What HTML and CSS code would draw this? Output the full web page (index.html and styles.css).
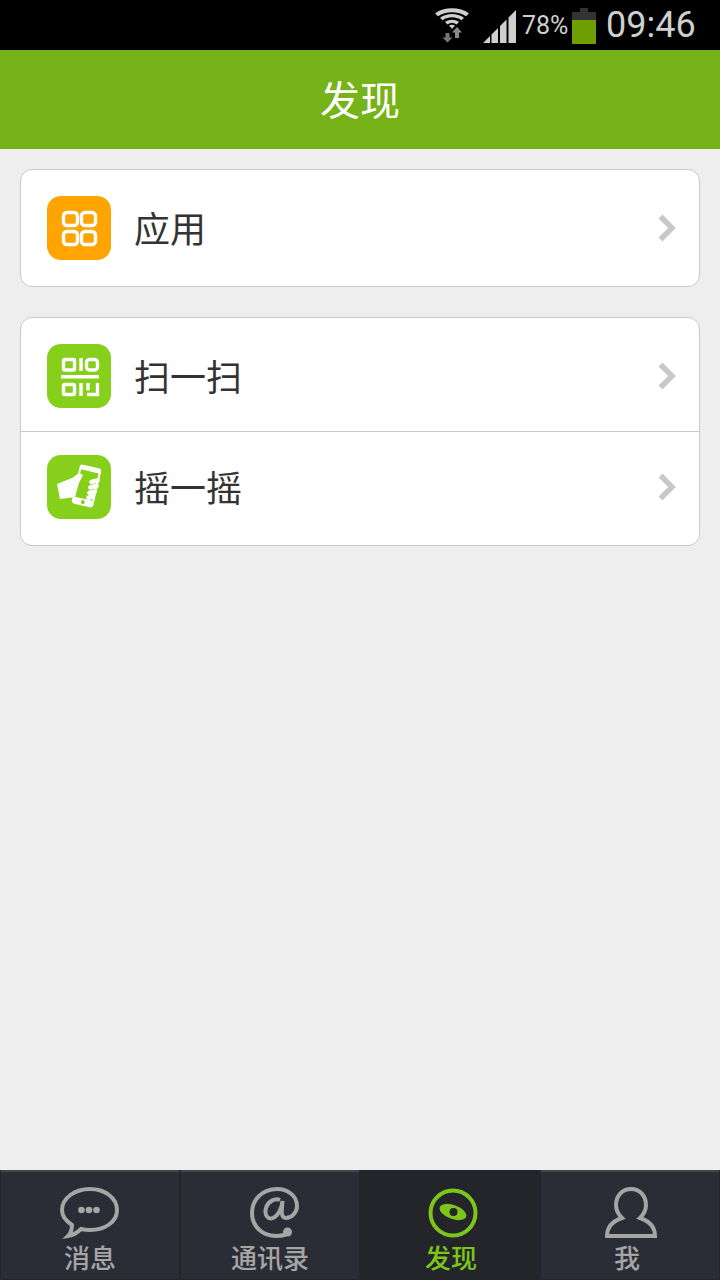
FILE: index.html
```html
<!DOCTYPE html>
<html lang="zh">
<head>
<meta charset="utf-8">
<title>发现</title>
<link rel="stylesheet" href="styles.css">
</head>
<body>
<div class="app">
  <div class="status">
    <svg class="st-wifi" width="36" height="38" viewBox="0 0 36 38">
      <g transform="scale(1 .85)" fill="#cfcfcf">
        <path d="M1 7.500C10 -0.500 26 -0.500 35 7.500L32 11C24.500 4.500 11.500 4.500 4 11Z"/>
        <path d="M6 12.500C13 7 23 7 30 12.500L27.500 15.500C21.500 11 14.500 11 8.500 15.500Z"/>
        <path d="M11 17.500C15.500 14 20.500 14 25 17.500L22.500 20.500C19.500 18 16.500 18 13.500 20.500Z"/>
        <path d="M15 22C17 20.500 19 20.500 21 22L18 25.500Z"/>
      </g>
      <path d="M11.500 26V30.500H8.500L13.500 35.500L18.500 30.500H15.500V26Z" fill="#777"/>
      <path d="M21 31V25.500H18L23 20L28 25.500H25V31Z" fill="#8a8a8a"/>
    </svg>
    <svg class="st-signal" width="33" height="33" viewBox="0 0 33 33">
      <path d="M0 33L7 26V33ZM8.500 33V24.500L15 18V33ZM17 33V16L23.500 9.500V33ZM25.500 33V7.500L33 0V33Z" fill="#cfcfcf"/>
    </svg>
    <span class="st-pct">78%</span>
    <div class="st-batt"><div class="st-cap"></div><div class="st-empty"></div><div class="st-fill"></div></div>
    <span class="st-time">09:46</span>
  </div>
  <header class="title">发现</header>
  <main class="content">
    <section class="card">
      <div class="row row-first">
        <svg class="ico" width="64" height="64" viewBox="0 0 64 64">
          <rect width="64" height="64" rx="14" fill="#ffa400"/>
          <g fill="none" stroke="#fff" stroke-width="3.400">
            <rect x="16.500" y="16.500" width="14" height="13" rx="3.500"/>
            <rect x="34.500" y="16.500" width="14" height="13" rx="3.500"/>
            <rect x="16.500" y="35.500" width="14" height="13" rx="3.500"/>
            <rect x="34.500" y="35.500" width="14" height="13" rx="3.500"/>
          </g>
        </svg>
        <span class="label">应用</span>
        <svg class="chev" width="20" height="30" viewBox="0 0 20 30"><path d="M3.500 3.500L15 15L3.500 26.500" fill="none" stroke="#c8c8cc" stroke-width="5.500"/></svg>
      </div>
    </section>
    <section class="card">
      <div class="row row-a">
        <svg class="ico" width="64" height="64" viewBox="0 0 64 64">
          <rect width="64" height="64" rx="14" fill="#86cf1b"/>
          <g fill="none" stroke="#fff" stroke-width="3.400">
            <rect x="16.500" y="15.500" width="11" height="10.500" rx="1.500"/>
            <rect x="39.500" y="15.500" width="11" height="10.500" rx="3"/>
            <rect x="16.500" y="40.500" width="11" height="10" rx="1.500"/>
            <path d="M34 14V27M34 39V52M41 39V46.500M50.500 39V50.500H40"/>
          </g>
          <rect x="14" y="31" width="38" height="3.500" fill="#fff"/>
        </svg>
        <span class="label">扫一扫</span>
        <svg class="chev" width="20" height="30" viewBox="0 0 20 30"><path d="M3.500 3.500L15 15L3.500 26.500" fill="none" stroke="#c8c8cc" stroke-width="5.500"/></svg>
      </div>
      <div class="row row-b">
        <svg class="ico" width="64" height="64" viewBox="0 0 64 64">
          <rect width="64" height="64" rx="14" fill="#86cf1b"/>
          <g transform="rotate(13 39.500 31)">
            <rect x="28.500" y="11" width="22" height="40" rx="3" fill="#fff"/>
            <rect x="30.500" y="16" width="18" height="28" fill="#86cf1b"/>
            <circle cx="39.500" cy="47.500" r="2" fill="#86cf1b"/>
          </g>
          <path d="M10 29L25 23L32 18L36 20L32 28L28 42L13 44Z" fill="#fff"/>
          <g fill="#fff">
            <rect x="42" y="24" width="11" height="4.600" rx="2.300" transform="rotate(-14 47 26)"/>
            <rect x="41" y="29.500" width="11" height="4.600" rx="2.300" transform="rotate(-14 46 32)"/>
            <rect x="40" y="35" width="10" height="4.600" rx="2.300" transform="rotate(-14 45 37)"/>
            <rect x="39" y="40" width="9" height="4.600" rx="2.300" transform="rotate(-14 43 42)"/>
          </g>
        </svg>
        <span class="label">摇一摇</span>
        <svg class="chev" width="20" height="30" viewBox="0 0 20 30"><path d="M3.500 3.500L15 15L3.500 26.500" fill="none" stroke="#c8c8cc" stroke-width="5.500"/></svg>
      </div>
    </section>
  </main>
  <nav class="tabs">
    <div class="tab">
      <svg width="62" height="52" viewBox="0 0 62 52">
        <path d="M31 2C46 2 58 11 58 23C58 35 46 43 31 43C28 43 25 42.700 22 42C19 45 15 48 9 49C12 46 13 42 13 38C7 34 3 29 3 23C3 11 16 2 31 2Z" fill="none" stroke="#a5a5a5" stroke-width="4"/>
        <circle cx="22.500" cy="23" r="3.300" fill="#a5a5a5"/><circle cx="30" cy="23" r="3.300" fill="#a5a5a5"/><circle cx="37.500" cy="23" r="3.300" fill="#a5a5a5"/>
      </svg>
      <span class="tab-label">消息</span>
    </div>
    <div class="tab">
      <svg class="tab-icon-at" width="52" height="52" viewBox="0 0 52 52">
        <path d="M31 13C26 11 19 14 17 21C15 28 19 33 24 31C29 29 33 21 33.500 14C33 22 31 31 37 31C43 31 48 25 48 19C48 9 39 2 28 2C13 2 3 13 3 26C3 40 14 49 27 49C31 49 34 48.500 37 47.500" fill="none" stroke="#a5a5a5" stroke-width="4"/>
        <circle cx="38.500" cy="45" r="4.500" fill="#a5a5a5"/>
      </svg>
      <span class="tab-label">通讯录</span>
    </div>
    <div class="tab tab-on">
      <svg class="tab-icon-eye" width="52" height="52" viewBox="0 0 52 52">
        <circle cx="26" cy="26" r="22.500" fill="none" stroke="#7dc51b" stroke-width="4"/>
        <ellipse cx="26" cy="25" rx="14" ry="7" transform="rotate(20 26 25)" fill="#7dc51b"/>
        <circle cx="26.500" cy="25" r="4" fill="#23252b"/>
      </svg>
      <span class="tab-label tab-label-on">发现</span>
    </div>
    <div class="tab">
      <svg class="tab-icon-me" width="54" height="52" viewBox="0 0 54 52">
        <path d="M27 2C36 2 42 9 42 18C42 23 39 28 36 31C42 33 51 37 51 49H3C3 37 12 33 18 31C15 28 12 23 12 18C12 9 18 2 27 2Z" fill="none" stroke="#a5a5a5" stroke-width="4"/>
      </svg>
      <span class="tab-label tab-label-me">我</span>
    </div>
  </nav>
</div>
</body>
</html>
```
FILE: styles.css
```css
* { box-sizing: border-box; }
html, body { margin: 0; padding: 0; }
body { width: 720px; height: 1280px; overflow: hidden; font-family: "Noto Sans CJK SC", "Noto Sans", sans-serif; }
.app { width: 720px; height: 1280px; display: flex; flex-direction: column; background: #eeeeee; }

.status { height: 50px; flex: none; background: #000; display: flex; align-items: flex-start; color: #cfcfcf; font-family: Roboto, sans-serif; padding: 7px 0 0 434px; }
.st-wifi { margin-right: 13px; flex: none; }
.st-signal { margin: 3px 6px 0 0; flex: none; }
.st-pct { font-size: 25px; line-height: 26px; margin: 6px 4px 0 0; width: 46px; white-space: nowrap; }
.st-batt { width: 24px; height: 36px; display: flex; flex-direction: column; align-items: center; flex: none; margin-top: 1px; }
.st-cap { width: 8px; height: 4px; background: #333; }
.st-empty { width: 24px; height: 8px; background: #333; }
.st-fill { width: 24px; height: 24px; background: #6d9f00; }
.st-time { font-size: 36px; line-height: 36px; margin-left: 10px; white-space: nowrap; }

.title { height: 99px; flex: none; background: #76b319; color: #fff; font-size: 40px; line-height: 96px; text-align: center; }

.content { flex: 1; padding: 20px 20px 0; display: flex; flex-direction: column; gap: 30px; }
.card { background: #fff; border: 1px solid #c9c9c9; border-radius: 12px; }
.row { display: flex; align-items: center; padding: 0 22px 0 26px; }
.row-first { height: 116px; }
.row-a { height: 114px; padding-top: 3px; border-bottom: 1px solid #c9c9c9; }
.row-b { height: 113px; padding-bottom: 3px; }
.ico { flex: none; }
.label { font-size: 36px; line-height: 48px; color: #333; margin: 0 0 2px 23px; flex: 1; }
.chev { flex: none; }

.tabs { height: 110px; flex: none; display: grid; grid-template-columns: repeat(4, 1fr); background: #2b2d36; }
.tab { display: flex; flex-direction: column; align-items: center; padding-top: 15px; background: #2b2d36; border: 1px solid #23252b; border-top: 2px solid #43454c; border-radius: 3px; color: #a5a5a5; }
.tab-on { background: #23252b; border-top-color: #23252b; color: #7dc51b; }
.tab-label { font-size: 26px; line-height: 32px; margin-top: 2px; font-weight: 500; }
.tab-icon-at { margin-left: 10px; }
.tab-icon-eye { margin-left: 6px; }
.tab-icon-me { margin-left: 2px; }
.tab-label-on { margin-left: 2px; }
.tab-label-me { margin-right: 6px; }
```
